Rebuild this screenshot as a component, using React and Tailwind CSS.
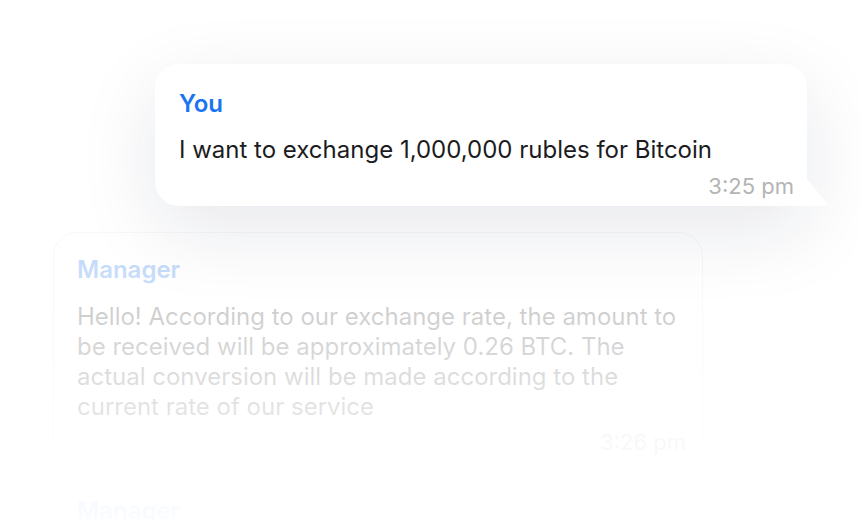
import React from "react";

export default function App() {
  return (
    <div className="relative w-[860px] h-[520px] overflow-hidden bg-white font-['Inter',sans-serif]">
      <div className="flex flex-col pt-[64px]">
        {/* User bubble */}
        <div className="relative z-10 ml-[155px] w-[652px] rounded-[24px] rounded-br-none bg-white pt-[26px] pl-6 pr-[13px] pb-[8px] shadow-[0_24px_80px_rgba(20,30,70,0.1)]">
          <div className="text-[24px] leading-[28px] font-semibold text-[#1b74f0]">You</div>
          <div className="mt-[18px] text-[24px] leading-[28px] text-[#1c1c1e]">
            I want to exchange 1,000,000 rubles for Bitcoin
          </div>
          <div className="mt-[10px] text-right text-[22px] leading-[24px] text-[#b4b4b4]">3:25 pm</div>
          <svg
            className="absolute bottom-0 left-[calc(100%-1px)]"
            width="24"
            height="28"
            viewBox="0 0 24 28"
            fill="#ffffff"
          >
            <path d="M0 0 L19.6 23.4 Q22.4 27.6 17 28 L0 28 Z" />
          </svg>
        </div>

        {/* Manager bubble */}
        <div className="ml-[53px] mt-[26px] w-[650px] rounded-[24px] rounded-bl-none border border-[#e3e5eb] bg-white pt-[23px] pl-[23px] pr-4 pb-[3px]">
          <div className="text-[24px] leading-[28px] font-semibold text-[#1b74f0]">Manager</div>
          <div className="mt-[18px] text-[24px] leading-[30px] text-[#1c1c1e]">
            Hello! According to our exchange rate, the amount to be received will be approximately 0.26 BTC. The actual conversion will be made according to the current rate of our service
          </div>
          <div className="mt-[8px] text-right text-[22px] leading-[24px] text-[#b4b4b4]">3:26 pm</div>
        </div>

        {/* Next bubble */}
        <div className="ml-[53px] mt-[16px] w-[650px] rounded-[24px] border border-[#e3e5eb] bg-white pt-[22px] pl-[23px] pr-4 pb-6">
          <div className="text-[24px] leading-[28px] font-semibold text-[#1b74f0]">Manager</div>
          <div className="mt-[18px] text-[24px] leading-[30px] text-[#1c1c1e]">
            The exchange will be processed shortly
          </div>
        </div>
      </div>

      {/* Fade overlay */}
      <div className="pointer-events-none absolute inset-x-0 top-[220px] bottom-0 z-[5] bg-gradient-to-b from-[rgba(255,255,255,0.7)] to-[rgba(255,255,255,0.98)]" />
    </div>
  );
}
